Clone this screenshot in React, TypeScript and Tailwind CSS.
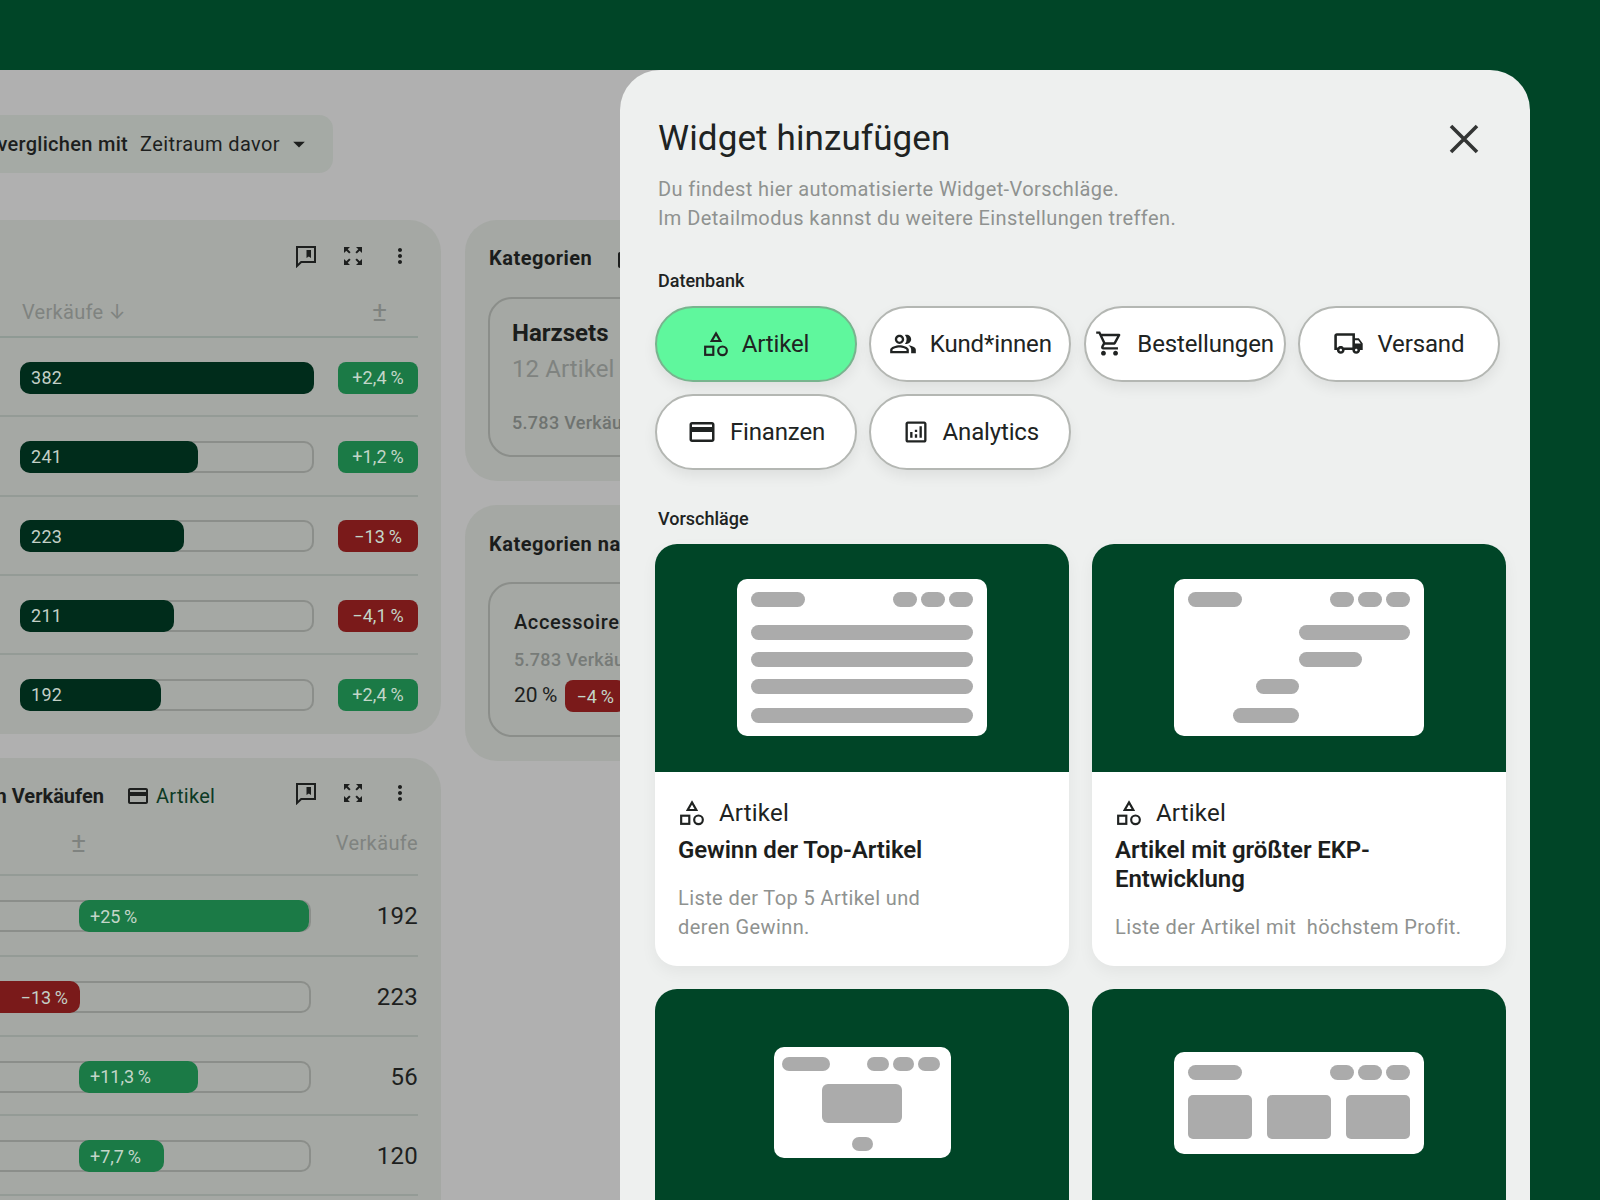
import React from "react";
import {
  MdArrowDropDown,
  MdMoreVert,
  MdOutlineAnalytics,
  MdOutlineCreditCard,
  MdOutlineLocalShipping,
  MdOutlinePeopleAlt,
  MdOutlineShoppingCart,
  MdZoomOutMap,
} from "react-icons/md";

const font = { fontFamily: "Roboto, 'Liberation Sans', sans-serif" };

function Shapes({ size = 24 }: { size?: number }) {
  return (
    <svg width={size} height={size} viewBox="0 0 24 24" fill="none" stroke="currentColor" strokeWidth="2">
      <path d="M12 2.2 16 9.2H8z" />
      <rect x="2" y="14.5" width="7.5" height="7.5" />
      <circle cx="18" cy="18.3" r="4" />
    </svg>
  );
}

function Note() {
  return (
    <svg width="24" height="24" viewBox="0 0 24 24" className="text-[#1d1f1e]">
      <path d="M3 3h18v15H7.2L3 22z" fill="none" stroke="currentColor" strokeWidth="2" />
      <path d="M12.5 6h4.5v8l-2.2-1.6L12.5 14z" fill="currentColor" />
    </svg>
  );
}

function Tools() {
  return (
    <div className="flex items-center gap-[23px] text-[#1d1f1e]">
      <Note />
      <MdZoomOutMap size={24} />
      <MdMoreVert size={24} />
    </div>
  );
}

function Badge({ v, up, narrow }: { v: string; up: boolean; narrow?: boolean }) {
  return (
    <div className={`flex h-[32px] items-center justify-center rounded-[8px] text-[18px] tracking-[0.1px] text-[#c3d6c9] ${narrow ? "w-[60px]" : "w-[80px]"} ${up ? "bg-[#1b7a46]" : "bg-[#7a1a1a]"}`}>
      {v}
    </div>
  );
}

const topRows = [
  { n: "382", w: 294, v: "+2,4\u2009%", up: true },
  { n: "241", w: 178, v: "+1,2\u2009%", up: true },
  { n: "223", w: 164, v: "−13\u2009%", up: false },
  { n: "211", w: 154, v: "−4,1\u2009%", up: false },
  { n: "192", w: 141, v: "+2,4\u2009%", up: true },
];

const lowRows = [
  { n: "192", w: 232, v: "+25\u2009%", up: true },
  { n: "223", w: 0, v: "−13\u2009%", up: false },
  { n: "56", w: 119, v: "+11,3\u2009%", up: true },
  { n: "120", w: 85, v: "+7,7\u2009%", up: true },
];

function TopCard() {
  return (
    <div className="h-[514px] w-[441px] rounded-r-[32px] bg-[#a5a8a4] pr-[23px]">
      <div className="flex h-[70px] items-center justify-end pr-[6px] pt-[2px]">
        <Tools />
      </div>
      <div className="flex h-[48px] items-center justify-between border-b-2 border-[#8f9a94] pb-[3px] pl-[22px] pr-[31px] text-[20px] text-[#7f8380]">
        <span className="tracking-[0.3px]">
          Verkäufe <span className="font-['Inter'] text-[20px]">↓</span>
        </span>
        <span className="text-[28px] leading-none">±</span>
      </div>
      {topRows.map((r, i) => (
        <div key={r.n + i} className={`flex h-[79.3px] items-center gap-[24px] pl-[20px] ${i < 4 ? "border-b-2 border-[#949b96] pt-[2px]" : ""}`}>
          <div className="h-[32px] w-[294px] rounded-[10px] border-2 border-[#8b8e8a]">
            <div className="-m-[2px] flex h-[32px] items-center rounded-[10px] bg-[#002c1b] pl-[11px] text-[18px] tracking-[0.3px] text-[#c3cfc6]" style={{ width: r.w }}>
              {r.n}
            </div>
          </div>
          <Badge v={r.v} up={r.up} />
        </div>
      ))}
    </div>
  );
}

function LowCard() {
  return (
    <div className="mt-[24px] h-[500px] w-[441px] rounded-tr-[32px] bg-[#a5a8a4] pr-[23px]">
      <div className="flex h-[72px] items-center justify-between pt-[4px]">
        <div className="flex items-center text-[20px]">
          <div className="flex w-[104px] justify-end overflow-hidden whitespace-nowrap font-bold text-[#1b1d1c]">
            <span>Top-Artikel mit den meisten Verkäufen</span>
          </div>
          <MdOutlineCreditCard size={24} className="ml-[22px] text-[#1d1f1e]" />
          <span className="ml-[6px] text-[#0d3a24] tracking-[0.3px]">Artikel</span>
        </div>
        <div className="-mt-[7px] pr-[6px]">
          <Tools />
        </div>
      </div>
      <div className="flex h-[46px] items-center justify-between border-b-2 border-[#949b96] pb-[18px] pl-[71px] text-[20px] text-[#7f8380]">
        <span className="text-[28px] leading-none">±</span>
        <span className="tracking-[0.4px]">Verkäufe</span>
      </div>
      {lowRows.map((r, i) => (
        <div key={r.n} className={`flex items-center border-b-2 border-[#949b96] ${i === 0 ? "h-[81px] pt-[1px]" : "h-[79.5px] pt-[2.5px]"}`}>
          <div className="flex h-[32px] w-[311px] rounded-r-[10px] border-y-2 border-r-2 border-[#8b8e8a]">
            <div className="flex w-[79px] shrink-0 justify-end">
              {r.up ? null : (
                <div className="-my-[2px] -mr-[1px] flex h-[32px] w-[82px] items-center justify-end rounded-r-[10px] bg-[#7a1a1a] pr-[12px] text-[18px] text-[#c3cfc6]">
                  {r.v}
                </div>
              )}
            </div>
            {r.up ? (
              <div className="-my-[2px] flex h-[32px] items-center rounded-[10px] bg-[#1b7a46] pl-[11px] text-[18px] text-[#c3d6c9]" style={{ width: r.w }}>
                {r.v}
              </div>
            ) : null}
          </div>
          <div className="flex-1 text-right text-[24px] tracking-[0.3px] text-[#1d1f1e]">{r.n}</div>
        </div>
      ))}
    </div>
  );
}

function SideCards() {
  return (
    <div className="ml-[24px] w-[300px] shrink-0">
      <div className="h-[261px] rounded-l-[32px] bg-[#a5a8a4] pl-[24px]">
        <div className="flex h-[77px] items-center pb-[1px] text-[20px]">
          <span className="font-bold tracking-[0.5px] text-[#1b1d1c]">Kategorien</span>
          <MdOutlineCreditCard size={24} className="ml-[24px] mt-[3px] text-[#1d1f1e]" />
        </div>
        <div className="-ml-[1px] h-[160px] w-[400px] rounded-[24px] border-2 border-[#8b8e8a] pl-[22px]">
          <div className="mt-[19px] text-[24px] font-bold leading-[30px] text-[#1b1d1c]">Harzsets</div>
          <div className="mt-[6px] text-[24px] leading-[30px] tracking-[0.1px] text-[#7f8380]">12 Artikel</div>
          <div className="mt-[27px] text-[18px] font-medium leading-[24px] tracking-[0.3px] text-[#6f7370]">5.783 Verkäufe</div>
        </div>
      </div>
      <div className="mt-[24px] h-[256px] rounded-l-[32px] bg-[#a5a8a4] pl-[24px]">
        <div className="flex h-[77px] items-center whitespace-nowrap text-[20px] font-bold tracking-[0.5px] text-[#1b1d1c]">Kategorien nach Verkäufen</div>
        <div className="-ml-[1px] h-[155px] w-[400px] rounded-[24px] border-2 border-[#8b8e8a] pl-[24px]">
          <div className="mt-[24px] text-[20px] font-medium leading-[28px] tracking-[0.6px] text-[#1b1d1c]">Accessoires</div>
          <div className="mt-[12px] text-[18px] font-medium leading-[24px] tracking-[0.3px] text-[#777b78]">5.783 Verkäufe</div>
          <div className="mt-[8px] flex h-[32px] items-center gap-[8px]">
            <span className="text-[21px] text-[#1d1f1e]">20{"\u2009"}%</span>
            <Badge v={"−4\u2009%"} up={false} narrow />
          </div>
        </div>
      </div>
    </div>
  );
}

function Dashboard() {
  return (
    <div className="h-[1130px] w-[660px] shrink-0 overflow-hidden bg-[#b0b0b0] pt-[45px]">
      <div className="flex h-[58px] w-[333px] items-center justify-end whitespace-nowrap rounded-r-[14px] bg-[#a5aaa5] pr-[20px] text-[20px] text-[#1d1f1e]">
        <span className="shrink-0 font-medium tracking-[0.3px]">verglichen mit</span>
        <span className="ml-[12px] shrink-0 tracking-[0.4px]">Zeitraum davor</span>
        <MdArrowDropDown size={28} className="ml-[5px] shrink-0" />
      </div>
      <div className="mt-[47px] flex">
        <div className="w-[441px] shrink-0">
          <TopCard />
          <LowCard />
        </div>
        <SideCards />
      </div>
    </div>
  );
}

const pills = [
  { label: "Artikel", icon: <Shapes size={26} />, active: true },
  { label: "Kund*innen", icon: <MdOutlinePeopleAlt size={28} /> },
  { label: "Bestellungen", icon: <MdOutlineShoppingCart size={29} /> },
  { label: "Versand", icon: <MdOutlineLocalShipping size={31} /> },
  { label: "Finanzen", icon: <MdOutlineCreditCard size={30} /> },
  { label: "Analytics", icon: <MdOutlineAnalytics size={28} /> },
];

function Pill({ label, icon, active }: { label: string; icon: React.ReactNode; active?: boolean }) {
  return (
    <div className={`flex h-[76px] items-center justify-center gap-[13px] rounded-full border-2 text-[24px] tracking-[-0.15px] text-[#202322] shadow-[0_6px_14px_rgba(0,0,0,0.07)] ${active ? "border-[#78b48e] bg-[#5ff79d]" : "border-[#b4b7b3] bg-white"}`}>
      {icon}
      <span>{label}</span>
    </div>
  );
}

function Bar({ w }: { w: string }) {
  return <div className={`h-[15px] rounded-full bg-[#ababab] ${w}`} />;
}

function WindowHead({ small = false }: { small?: boolean }) {
  return (
    <div className={`flex items-center justify-between ${small ? "h-[14px]" : ""}`}>
      <div className={`rounded-full bg-[#ababab] ${small ? "h-[14px] w-[48px]" : "h-[15px] w-[54px]"}`} />
      <div className={`flex ${small ? "gap-[4px] pr-[3px]" : "gap-[4px]"}`}>
        <div className={`rounded-full bg-[#ababab] ${small ? "h-[14px] w-[22px]" : "h-[15px] w-[24px]"}`} />
        <div className={`rounded-full bg-[#ababab] ${small ? "h-[14px] w-[21px]" : "h-[15px] w-[24px]"}`} />
        <div className={`rounded-full bg-[#ababab] ${small ? "h-[14px] w-[22px]" : "h-[15px] w-[24px]"}`} />
      </div>
    </div>
  );
}

function Preview({ children }: { children: React.ReactNode }) {
  return <div className="flex h-[228px] items-center justify-center bg-[#004527]">{children}</div>;
}

function ListPreview() {
  return (
    <div className="h-[157px] w-[250px] rounded-[10px] bg-white px-[14px] pt-[13px]">
      <WindowHead />
      <div className="mt-[18px] flex flex-col gap-[12px]">
        <Bar w="w-full" />
        <Bar w="w-full" />
        <Bar w="w-full" />
        <div className="mt-[2px]"><Bar w="w-full" /></div>
      </div>
    </div>
  );
}

function DivergePreview() {
  return (
    <div className="h-[157px] w-[250px] rounded-[10px] bg-white px-[14px] pt-[13px]">
      <WindowHead />
      <div className="mt-[18px] flex flex-col gap-[12px]">
        <div className="ml-[111px]"><Bar w="w-[111px]" /></div>
        <div className="ml-[111px]"><Bar w="w-[63px]" /></div>
        <div className="ml-[68px]"><Bar w="w-[43px]" /></div>
        <div className="mt-[2px] ml-[45px]"><Bar w="w-[66px]" /></div>
      </div>
    </div>
  );
}

function SinglePreview() {
  return (
    <div className="h-[111px] w-[177px] rounded-[10px] bg-white px-[8px] pt-[10px]">
      <WindowHead small />
      <div className="mx-auto mt-[13px] h-[39px] w-[80px] rounded-[6px] bg-[#ababab]" />
      <div className="mx-auto mt-[14px] h-[14px] w-[21px] rounded-full bg-[#ababab]" />
    </div>
  );
}

function TriplePreview() {
  return (
    <div className="h-[102px] w-[250px] rounded-[10px] bg-white px-[14px] pt-[13px]">
      <WindowHead />
      <div className="mt-[15px] flex justify-between">
        <div className="h-[44px] w-[64px] rounded-[5px] bg-[#ababab]" />
        <div className="h-[44px] w-[64px] rounded-[5px] bg-[#ababab]" />
        <div className="h-[44px] w-[64px] rounded-[5px] bg-[#ababab]" />
      </div>
    </div>
  );
}

function Suggestion({ preview, title, desc }: { preview: React.ReactNode; title: React.ReactNode; desc: React.ReactNode }) {
  return (
    <div className="overflow-hidden rounded-[22px] bg-white shadow-[0_6px_16px_rgba(0,0,0,0.05)]">
      <Preview>{preview}</Preview>
      <div className="px-[23px] pb-[23px] pt-[29px]">
        <div className="flex h-[24px] items-center gap-[14px] text-[24px] tracking-[0.2px] text-[#202322]">
          <span className="ml-[1px]"><Shapes size={26} /></span>
          <span>Artikel</span>
        </div>
        <div className="mt-[11px] text-[24px] font-semibold leading-[29.4px] tracking-[-0.1px] text-[#1c1e1d]">{title}</div>
        <div className="mt-[19px] text-[20px] leading-[29.3px] tracking-[0.4px] text-[#8f9290]">{desc}</div>
      </div>
    </div>
  );
}

function Modal() {
  return (
    <div className="relative -ml-[40px] h-[1130px] w-[910px] shrink-0 overflow-hidden rounded-t-[40px] bg-[#eef0ef] pl-[35px] pr-[24px] pt-[47px]">
      <div className="ml-[3px] flex h-[44px] items-center justify-between pr-[26px]">
        <h1 className="text-[35px] font-normal leading-[44px] tracking-[0.12px] text-[#202322]">Widget hinzufügen</h1>
        <svg width="32" height="32" viewBox="0 0 32 32" className="text-[#333534]">
          <path d="M3 3 29 29M29 3 3 29" stroke="currentColor" strokeWidth="3.6" />
        </svg>
      </div>
      <p className="ml-[3px] mt-[14px] text-[20px] leading-[29.3px] tracking-[0.4px] text-[#8f9290]">
        Du findest hier automatisierte Widget-Vorschläge.
        <br />
        Im Detailmodus kannst du weitere Einstellungen treffen.
      </p>
      <div className="ml-[3px] mt-[36px] text-[18px] font-medium leading-[22px] text-[#202322]">Datenbank</div>
      <div className="mt-[14px] grid w-[845px] grid-cols-[repeat(4,202px)] gap-x-[12.3px] gap-y-[12px]">
        {pills.map((p) => (
          <Pill key={p.label} label={p.label} icon={p.icon} active={p.active} />
        ))}
      </div>
      <div className="ml-[3px] mt-[38px] text-[18px] font-medium leading-[22px] text-[#202322]">Vorschläge</div>
      <div className="mt-[14px] grid grid-cols-[repeat(2,414px)] gap-x-[23px] gap-y-[23px]">
        <Suggestion
          preview={<ListPreview />}
          title="Gewinn der Top-Artikel"
          desc={<>Liste der Top 5 Artikel und<br />deren Gewinn.</>}
        />
        <Suggestion
          preview={<DivergePreview />}
          title={<>Artikel mit größter EKP-<br />Entwicklung</>}
          desc={"Liste der Artikel mit\u00a0 höchstem Profit."}
        />
        <div className="overflow-hidden rounded-t-[22px]"><Preview><SinglePreview /></Preview></div>
        <div className="overflow-hidden rounded-t-[22px]"><Preview><TriplePreview /></Preview></div>
      </div>
    </div>
  );
}

export default function App() {
  return (
    <div style={font} className="flex h-[1200px] w-[1600px] overflow-hidden bg-[#004527] pt-[70px]">
      <Dashboard />
      <Modal />
    </div>
  );
}
